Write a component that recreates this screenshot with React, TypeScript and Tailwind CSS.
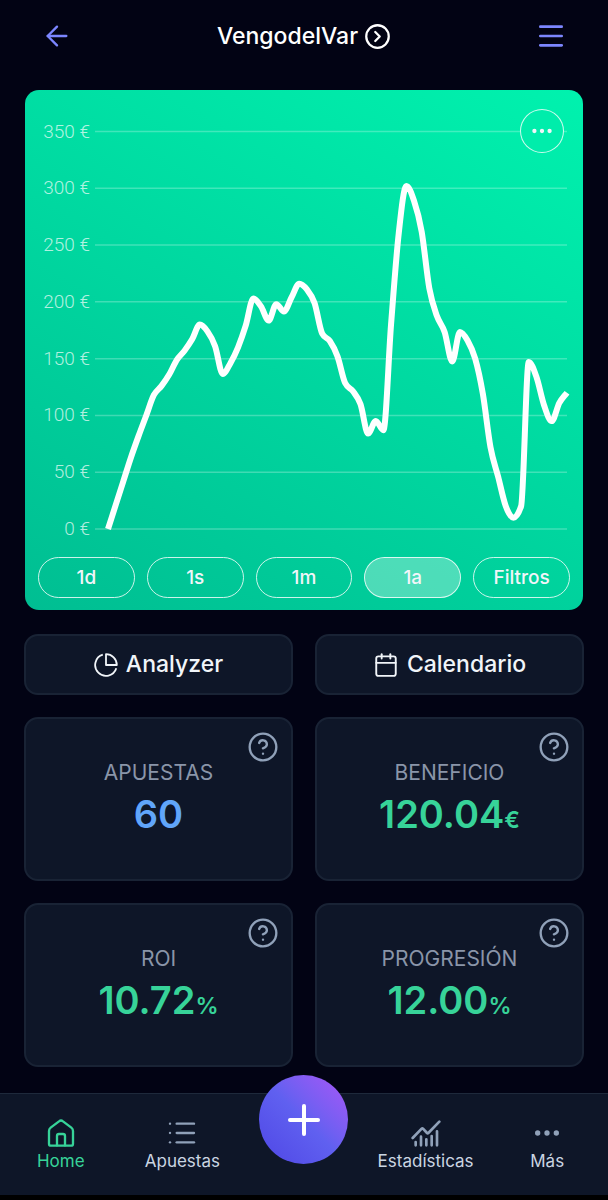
import { useState } from 'react';
import {
  ArrowLeft,
  Calendar,
  CircleChevronRight,
  CircleHelp,
  Ellipsis,
  List,
  Menu,
  Plus,
} from 'lucide-react';
import clsx from 'clsx';

interface Stat {
  label: string;
  value: string;
  unit?: string;
  color: string;
}

// Balance after each bet, in euros
const BALANCE = [
  0, 21, 42, 63, 82, 100, 118, 126, 136, 149, 157, 167, 180, 174, 161, 136.5, 146, 160, 179, 203,
  196, 183.5, 198, 191.5, 204, 216, 211, 199, 172, 165.5, 152, 128.5, 121.5, 110, 84, 95, 87, 180,
  260, 302, 289, 262, 212, 187.5, 173.5, 147.5, 173.5, 166, 150, 119, 72, 46, 20, 10, 20,
  147, 134, 109, 95, 111, 120.04,
];

const TICKS = [350, 300, 250, 200, 150, 100, 50, 0];
const RANGES = ['1d', '1s', '1m', '1a', 'Filtros'];

const STATS: Stat[] = [
  { label: 'APUESTAS', value: '60', color: 'text-[#60a5fa]' },
  { label: 'BENEFICIO', value: '120.04', unit: '€', color: 'text-[#37d399]' },
  { label: 'ROI', value: '10.72', unit: '%', color: 'text-[#37d399]' },
  { label: 'PROGRESIÓN', value: '12.00', unit: '%', color: 'text-[#37d399]' },
];

const toX = (i: number) => 83 + (i * 459) / (BALANCE.length - 1);
const toY = (euros: number) => 439 - (euros * 397.5) / 350;

// Monotone cubic curve, so that the line never overshoots a value
function smoothPath(values: number[]) {
  const pts = values.map((v, i) => [toX(i), toY(v)]);
  const slopes = pts.slice(1).map((p, i) => (p[1] - pts[i][1]) / (p[0] - pts[i][0]));
  const tangents = pts.map((_, i) => {
    if (i === 0) return slopes[0];
    if (i === pts.length - 1) return slopes[i - 1];
    const a = slopes[i - 1];
    const b = slopes[i];
    return a * b <= 0 ? 0 : Math.sign(a) * Math.min(2 * Math.abs(a), 2 * Math.abs(b), Math.abs(a + b) / 2);
  });
  let d = `M${pts[0][0]} ${pts[0][1]}`;
  for (let i = 1; i < pts.length; i++) {
    const [x0, y0] = pts[i - 1];
    const [x1, y1] = pts[i];
    const h = (x1 - x0) / 3;
    d += `C${x0 + h} ${y0 + tangents[i - 1] * h} ${x1 - h} ${y1 - tangents[i] * h} ${x1} ${y1}`;
  }
  return d;
}

function BalanceChart() {
  return (
    <svg viewBox="0 0 558 454" className="block w-full" role="img" aria-label="Evolución del saldo">
      {TICKS.map((t) => (
        <g key={t}>
          <line x1="70" x2="542" y1={toY(t)} y2={toY(t)} stroke="#fff" strokeOpacity="0.25" strokeWidth="1.5" />
          <text
            x="65"
            y={toY(t) + 6}
            textAnchor="end"
            fill="#fff"
            fillOpacity="0.7"
            className="font-[Roboto,sans-serif] text-[19px] font-light"
          >
            {t} €
          </text>
        </g>
      ))}
      <path d={smoothPath(BALANCE)} fill="none" stroke="#fff" strokeWidth="6" strokeLinejoin="round" />
    </svg>
  );
}

function PieIcon() {
  return (
    <svg viewBox="0 0 24 24" className="size-6" fill="none" stroke="currentColor" strokeWidth="1.8" strokeLinejoin="round">
      <path d="M12 1.2A10.8 10.8 0 0 1 22.8 12H12Z" />
      <path d="M22.3 15.2A10.8 10.8 0 1 1 8.8 1.7" />
    </svg>
  );
}

function HomeIcon() {
  return (
    <svg viewBox="0 0 84 84" className="size-7" fill="none" stroke="currentColor" strokeWidth="7" strokeLinecap="round" strokeLinejoin="round">
      <path d="M6 36Q6 30 11 26L36 7Q42 2 48 7L73 26Q78 30 78 36V74Q78 80 72 80H12Q6 80 6 74Z" />
      <path d="M30 79V51Q30 45 36 45H48Q54 45 54 51V79" />
    </svg>
  );
}

function StatsIcon() {
  return (
    <svg viewBox="0 0 90 84" className="h-7 w-[30px]" fill="none" stroke="currentColor" strokeWidth="8" strokeLinecap="round" strokeLinejoin="round">
      <path d="M5 57L32 29Q34 27 36 29L48 42Q50 44 52 42L85 8" />
      <path d="M14 69V79M30 53V79M46 61V79M62 51V79M78 37V79" />
    </svg>
  );
}

function StatCard({ label, value, unit, color }: Stat) {
  return (
    <section className="relative flex h-[164px] flex-col items-center rounded-[14px] border-2 border-[#192335] bg-[#0e1628] pt-10">
      <button type="button" aria-label={`Ayuda: ${label}`} className="absolute top-3 right-3 text-slate-400">
        <CircleHelp className="size-8" strokeWidth={1.75} />
      </button>
      <h2 className="text-[21px] leading-7 text-[#8a95a9]">{label}</h2>
      <p className={clsx('text-[38px] leading-[54px] font-semibold', color)}>
        {value}
        {unit && <span className="text-[23px]">{unit}</span>}
      </p>
    </section>
  );
}

export default function App() {
  const [range, setRange] = useState('1a');

  return (
    <div className="flex min-h-screen flex-col bg-[#020314] font-[Inter,sans-serif] text-slate-100">
      {/* Header */}
      <header className="flex h-[72px] items-center justify-between px-[41px]">
        <button type="button" aria-label="Volver" className="text-indigo-400">
          <ArrowLeft className="size-8" strokeWidth={1.75} />
        </button>
        <button type="button" className="flex items-center gap-[6px] text-[23px] font-medium text-white">
          VengodelVar
          <CircleChevronRight className="size-[27px]" strokeWidth={2} />
        </button>
        <button type="button" aria-label="Menú" className="text-indigo-400">
          <Menu className="size-8" strokeWidth={2} />
        </button>
      </header>

      <main className="px-6 pt-[18px] pb-[26px]">
        {/* Chart */}
        <section className="relative mx-px rounded-[14px] bg-linear-[30deg] from-[#00be92] to-[#00f2ae] pb-3">
          <BalanceChart />
          <button
            type="button"
            aria-label="Más opciones"
            className="absolute top-[19px] right-[19px] flex size-11 items-center justify-center rounded-full border border-white/80 bg-[#00edab]"
          >
            <Ellipsis className="size-[26px]" />
          </button>
          <div className="mt-[13px] grid grid-cols-5 gap-3 px-[13px]">
            {RANGES.map((r) => (
              <button
                key={r}
                type="button"
                aria-pressed={range === r}
                onClick={() => setRange(r)}
                className={clsx(
                  'h-[41px] rounded-full border border-white/80 pt-[2px] text-[19px] font-medium',
                  range === r && 'bg-white/30',
                )}
              >
                {r}
              </button>
            ))}
          </div>
        </section>

        {/* Shortcuts and stats */}
        <div className="mt-6 grid grid-cols-2 gap-[22px]">
          <button type="button" className="flex h-[61px] items-center justify-center gap-2 rounded-[14px] border-2 border-[#192335] bg-[#0e1628] text-[23px] font-medium">
            <PieIcon />
            Analyzer
          </button>
          <button type="button" className="flex h-[61px] items-center justify-center gap-2 rounded-[14px] border-2 border-[#192335] bg-[#0e1628] text-[23px] font-medium">
            <Calendar className="size-[26px]" strokeWidth={1.75} />
            Calendario
          </button>
          {STATS.map((s) => (
            <StatCard key={s.label} {...s} />
          ))}
        </div>
      </main>

      {/* Bottom navigation */}
      <nav className="mt-auto grid grid-cols-5 items-start justify-items-center border-t border-b-[5px] border-t-[#1e293b] border-b-black bg-[#0e1628] pt-[23px] pb-6 text-[17px] leading-5 text-slate-300">
        <a href="#home" aria-current="page" className="flex flex-col items-center gap-[2px] text-[#37d399]">
          <span className="flex h-8 items-center">
            <HomeIcon />
          </span>
          Home
        </a>
        <a href="#apuestas" className="flex flex-col items-center gap-[2px]">
          <List className="size-8 text-slate-400" strokeWidth={1.75} />
          Apuestas
        </a>
        <button
          type="button"
          aria-label="Nueva apuesta"
          className="-mt-[42px] flex size-[89px] items-center justify-center rounded-full bg-linear-to-tr from-[#4f46e5] via-[#6060f0] to-[#a855f7] text-white"
        >
          <Plus className="size-12" />
        </button>
        <a href="#estadisticas" className="flex flex-col items-center gap-[2px]">
          <span className="flex h-8 items-center text-slate-400">
            <StatsIcon />
          </span>
          Estadísticas
        </a>
        <a href="#mas" className="flex flex-col items-center gap-[2px]">
          <Ellipsis className="size-8 text-slate-400" />
          Más
        </a>
      </nav>
    </div>
  );
}
